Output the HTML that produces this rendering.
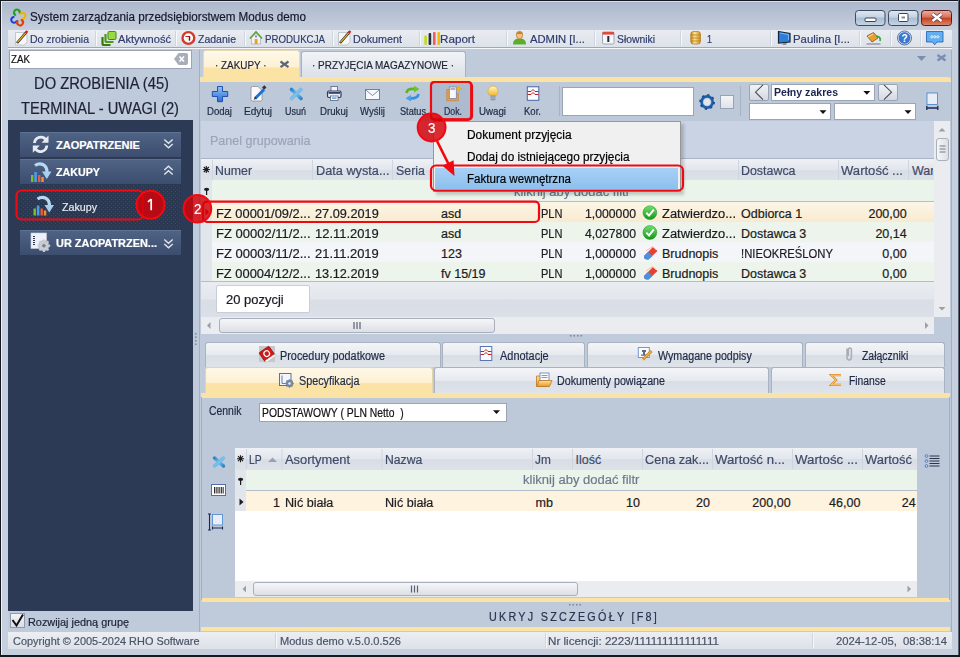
<!DOCTYPE html><html><head><meta charset="utf-8"><style>
*{margin:0;padding:0;box-sizing:border-box}
html,body{width:960px;height:657px;overflow:hidden;background:#bfcadb}
body{position:relative;font-family:"Liberation Sans",sans-serif}
.a{position:absolute}
.t{position:absolute;white-space:pre;line-height:1;transform-origin:0 0;font-family:"Liberation Sans",sans-serif;-webkit-text-stroke:0.2px currentColor}
svg{position:absolute;overflow:visible}
</style></head><body>
<div class="a" style="left:0px;top:0px;width:960px;height:657px;background:#bfcadb"></div>
<div class="a" style="left:0px;top:0px;width:960px;height:30px;background:linear-gradient(#aab6cb,#c6cfdd)"></div>
<div class="a" style="left:0px;top:0px;width:960px;height:1px;background:#15181e"></div>
<div class="a" style="left:1px;top:1px;width:958px;height:1px;background:#d9dfe9"></div>
<div class="a" style="left:0px;top:30px;width:8px;height:627px;background:#c6cfdd"></div>
<div class="a" style="left:952px;top:30px;width:7px;height:627px;background:#c6cfdd"></div>
<div class="a" style="left:0px;top:649px;width:960px;height:8px;background:#c6cfdd"></div>
<div class="a" style="left:0px;top:0px;width:1px;height:657px;background:#15181e"></div>
<div class="a" style="left:959px;top:0px;width:1px;height:657px;background:#15181e"></div>
<div class="a" style="left:958px;top:0px;width:1px;height:657px;background:#5a6272"></div>
<div class="a" style="left:0px;top:655px;width:960px;height:2px;background:#15181e"></div>
<div class="a" style="left:1px;top:1px;width:1px;height:654px;background:#eef2f7"></div>
<div class="a" style="left:8px;top:30px;width:944px;height:17px;background:linear-gradient(#e9ecf1,#dde2e9)"></div>
<div class="a" style="left:8px;top:47px;width:944px;height:1px;background:#a2a8b2"></div>
<div class="a" style="left:8px;top:48px;width:944px;height:1px;background:#f4f6f9"></div>
<div class="a" style="left:9px;top:50px;width:183px;height:19px;background:#fff;border:1px solid #9ba5b6"></div>
<div class="a" style="left:8px;top:120px;width:185px;height:491px;background:#2c3a56"></div>
<div class="a" style="left:20px;top:132px;width:161px;height:25px;background:linear-gradient(#4f6385,#3c4d6e);border-top:1px solid #5d7192"></div>
<div class="a" style="left:20px;top:159px;width:161px;height:25px;background:linear-gradient(#4f6385,#3c4d6e);border-top:1px solid #5d7192"></div>
<div class="a" style="left:20px;top:230px;width:161px;height:25px;background:linear-gradient(#4f6385,#3c4d6e);border-top:1px solid #5d7192"></div>
<svg width="161" height="45" style="left:20px;top:184px"><defs><pattern id="dots" x="0" y="0" width="4" height="4" patternUnits="userSpaceOnUse"><rect width="4" height="4" fill="#2a3852"/><rect x="1" y="1" width="1" height="1" fill="#3a4b6a"/><rect x="3" y="3" width="1" height="1" fill="#3a4b6a"/></pattern></defs><rect width="161" height="45" fill="url(#dots)"/></svg>
<div class="a" style="left:10px;top:613px;width:15px;height:15px;background:linear-gradient(#f3f4f7,#d9dde5);border:1px solid #8f99a9"></div>
<div class="a" style="left:8px;top:632px;width:944px;height:17px;background:linear-gradient(#eceef2,#dde1e8)"></div>
<div class="a" style="left:275px;top:633px;width:1px;height:15px;background:#d0d5dd;box-shadow:1px 0 0 #f6f7f9"></div>
<div class="a" style="left:545px;top:633px;width:1px;height:15px;background:#d0d5dd;box-shadow:1px 0 0 #f6f7f9"></div>
<div class="a" style="left:812px;top:633px;width:1px;height:15px;background:#d0d5dd;box-shadow:1px 0 0 #f6f7f9"></div>
<div class="a" style="left:199px;top:50px;width:1px;height:582px;background:#a4afc0"></div>
<div class="a" style="left:203px;top:50px;width:97px;height:28px;background:linear-gradient(#fef8e9 0%,#fdf1d2 60%,#fbe3a5 62%,#fbe3a5 100%);border:1px solid #e8d9b5;border-bottom:none;border-radius:3px 3px 0 0"></div>
<div class="a" style="left:301px;top:51px;width:165px;height:26px;background:linear-gradient(#f1f3f6,#dce1e8);border:1px solid #a9b2c1;border-bottom:none;border-radius:3px 3px 0 0"></div>
<div class="a" style="left:200px;top:77px;width:751px;height:5px;background:#fbe3a5;border-radius:0 3px 0 0"></div>
<div class="a" style="left:200px;top:82px;width:751px;height:39px;background:#bdc8d9"></div>
<div class="a" style="left:430px;top:81px;width:42px;height:39px;background:#aebbcf;border:2px solid #e41f26;border-radius:4px"></div>
<div class="a" style="left:559px;top:86px;width:1px;height:30px;background:#a7b2c3"></div>
<div class="a" style="left:740px;top:86px;width:1px;height:30px;background:#a7b2c3"></div>
<div class="a" style="left:562px;top:87px;width:132px;height:29px;background:#fff;border:1px solid #9aa4b4"></div>
<div class="a" style="left:720px;top:95px;width:14px;height:14px;background:linear-gradient(#f4f5f8,#dfe3ea);border:1px solid #98a2b3"></div>
<div class="a" style="left:749px;top:84px;width:20px;height:17px;background:linear-gradient(#f1f3f6,#d4d9e1);border:1px solid #9aa4b4;border-radius:2px"></div>
<div class="a" style="left:771px;top:84px;width:104px;height:17px;background:#fff;border:1px solid #9aa4b4"></div>
<div class="a" style="left:878px;top:84px;width:20px;height:17px;background:linear-gradient(#f1f3f6,#d4d9e1);border:1px solid #9aa4b4;border-radius:2px"></div>
<div class="a" style="left:749px;top:103px;width:82px;height:17px;background:#fff;border:1px solid #9aa4b4"></div>
<div class="a" style="left:834px;top:103px;width:82px;height:17px;background:#fff;border:1px solid #9aa4b4"></div>
<div class="a" style="left:201px;top:121px;width:733px;height:38px;background:#c9d3e3"></div>
<div class="a" style="left:201px;top:158px;width:733px;height:1px;background:#aab4c4"></div>
<div class="a" style="left:201px;top:159px;width:733px;height:21px;background:linear-gradient(#eef1f5,#e2e6ed 50%,#d8dde6 51%,#dde2e9)"></div>
<div class="a" style="left:201px;top:180px;width:733px;height:22px;background:#ebf4eb"></div>
<div class="a" style="left:201px;top:180px;width:11px;height:22px;background:#e1e6ec"></div>
<div class="a" style="left:201px;top:201px;width:733px;height:1px;background:#b4bdca"></div>
<div class="a" style="left:212px;top:202px;width:722px;height:20px;background:linear-gradient(#fdf6e6,#f8ead0)"></div>
<div class="a" style="left:212px;top:222px;width:722px;height:20px;background:#ecf4eb"></div>
<div class="a" style="left:212px;top:242px;width:722px;height:20px;background:#f3f5f9"></div>
<div class="a" style="left:212px;top:262px;width:722px;height:20px;background:#ecf4eb"></div>
<div class="a" style="left:201px;top:202px;width:11px;height:80px;background:#e1e6ec"></div>
<div class="a" style="left:201px;top:281px;width:733px;height:1px;background:#b4bdca"></div>
<div class="a" style="left:201px;top:282px;width:733px;height:35px;background:linear-gradient(#e9ecf1,#e3e6ec 48%,#d9dde5 52%,#dbdfe7)"></div>
<div class="a" style="left:216px;top:285px;width:94px;height:28px;background:#fff;border:1px solid #c7ced9;border-radius:2px"></div>
<div class="a" style="left:201px;top:317px;width:733px;height:17px;background:#eaecf0"></div>
<div class="a" style="left:219px;top:318px;width:276px;height:15px;background:linear-gradient(#f5f6f8,#dcdfe5);border:1px solid #a9b0bb;border-radius:3px"></div>
<div class="a" style="left:934px;top:121px;width:16px;height:196px;background:#eaecf0"></div>
<div class="a" style="left:936px;top:138px;width:13px;height:23px;background:linear-gradient(90deg,#f5f6f8,#dcdfe5);border:1px solid #a9b0bb;border-radius:3px"></div>
<div class="a" style="left:205px;top:342px;width:236px;height:25px;background:linear-gradient(#f3f5f8,#e6e9ee 50%,#d9dee6 52%,#dfe3ea);border:1px solid #a9b2c1;border-bottom:none;border-radius:3px 3px 0 0"></div>
<div class="a" style="left:442px;top:342px;width:143px;height:25px;background:linear-gradient(#f3f5f8,#e6e9ee 50%,#d9dee6 52%,#dfe3ea);border:1px solid #a9b2c1;border-bottom:none;border-radius:3px 3px 0 0"></div>
<div class="a" style="left:587px;top:342px;width:216px;height:25px;background:linear-gradient(#f3f5f8,#e6e9ee 50%,#d9dee6 52%,#dfe3ea);border:1px solid #a9b2c1;border-bottom:none;border-radius:3px 3px 0 0"></div>
<div class="a" style="left:805px;top:342px;width:140px;height:25px;background:linear-gradient(#f3f5f8,#e6e9ee 50%,#d9dee6 52%,#dfe3ea);border:1px solid #a9b2c1;border-bottom:none;border-radius:3px 3px 0 0"></div>
<div class="a" style="left:205px;top:367px;width:228px;height:27px;background:linear-gradient(#fef8e9 0%,#fdf1d2 55%,#fbe3a5 60%,#fbe3a5 100%);border:1px solid #e3d3ae;border-bottom:none;border-radius:3px 3px 0 0"></div>
<div class="a" style="left:434px;top:367px;width:335px;height:26px;background:linear-gradient(#f3f5f8,#e6e9ee 50%,#d9dee6 52%,#dfe3ea);border:1px solid #a9b2c1;border-bottom:none;border-radius:3px 3px 0 0"></div>
<div class="a" style="left:771px;top:367px;width:174px;height:26px;background:linear-gradient(#f3f5f8,#e6e9ee 50%,#d9dee6 52%,#dfe3ea);border:1px solid #a9b2c1;border-bottom:none;border-radius:3px 3px 0 0"></div>
<div class="a" style="left:201px;top:393px;width:749px;height:5px;background:#fbe3a5"></div>
<div class="a" style="left:201px;top:398px;width:749px;height:200px;background:#bdc8d9"></div>
<div class="a" style="left:259px;top:403px;width:248px;height:19px;background:#fff;border:1px solid #9aa4b4"></div>
<div class="a" style="left:235px;top:448px;width:682px;height:22px;background:linear-gradient(#eef1f5,#e2e6ed 50%,#d8dde6 51%,#dde2e9)"></div>
<div class="a" style="left:235px;top:470px;width:682px;height:21px;background:#ebf4eb"></div>
<div class="a" style="left:235px;top:490px;width:682px;height:1px;background:#b4bdca"></div>
<div class="a" style="left:246px;top:491px;width:671px;height:20px;background:#fdf3df"></div>
<div class="a" style="left:235px;top:470px;width:11px;height:41px;background:#e1e6ec"></div>
<div class="a" style="left:235px;top:511px;width:682px;height:70px;background:#fff"></div>
<div class="a" style="left:235px;top:581px;width:682px;height:16px;background:#eaecf0"></div>
<div class="a" style="left:253px;top:582px;width:325px;height:14px;background:linear-gradient(#f5f6f8,#dcdfe5);border:1px solid #a9b0bb;border-radius:3px"></div>
<div class="a" style="left:202px;top:598px;width:748px;height:4px;background:#fbe3a5"></div>
<div class="a" style="left:201px;top:627px;width:749px;height:4px;background:#fbe3a5"></div>
<div class="a" style="left:201px;top:397px;width:1px;height:203px;background:#a4afc0"></div>
<div class="a" style="left:949px;top:397px;width:1px;height:203px;background:#a4afc0"></div>
<div class="a" style="left:951px;top:50px;width:1px;height:582px;background:#a4afc0"></div>
<div class="t" style="left:30.00px;top:11px;font-size:12.5px;color:#15182a;transform:scaleX(0.9325);">System zarządzania przedsiębiorstwem Modus demo</div>
<div class="t" style="left:30.00px;top:34px;font-size:11.5px;color:#2f3c6e;transform:scaleX(0.9136);">Do zrobienia</div>
<div class="t" style="left:118.00px;top:34px;font-size:11.5px;color:#2f3c6e;transform:scaleX(0.9642);">Aktywność</div>
<div class="t" style="left:198.00px;top:34px;font-size:11.5px;color:#2f3c6e;transform:scaleX(0.9143);">Zadanie</div>
<div class="t" style="left:265.00px;top:34px;font-size:11.5px;color:#2f3c6e;transform:scaleX(0.8458);">PRODUKCJA</div>
<div class="t" style="left:353.00px;top:34px;font-size:11.5px;color:#2f3c6e;transform:scaleX(0.9347);">Dokument</div>
<div class="t" style="left:440.00px;top:34px;font-size:11.5px;color:#2f3c6e;transform:scaleX(1.0136);">Raport</div>
<div class="t" style="left:530.00px;top:34px;font-size:11.5px;color:#2f3c6e;transform:scaleX(0.9780);">ADMIN [I...</div>
<div class="t" style="left:617.00px;top:34px;font-size:11.5px;color:#2f3c6e;transform:scaleX(0.9007);">Słowniki</div>
<div class="t" style="left:707.00px;top:34px;font-size:11.5px;color:#2f3c6e;transform:scaleX(0.7805);">1</div>
<div class="t" style="left:793.00px;top:34px;font-size:11.5px;color:#2f3c6e;transform:scaleX(0.9905);">Paulina [I...</div>
<div class="t" style="left:11.00px;top:54px;font-size:11.5px;color:#111;transform:scaleX(0.8492);">ZAK</div>
<div class="t" style="left:34.00px;top:76px;font-size:16px;color:#1d2236;transform:scaleX(0.9202);">DO ZROBIENIA (45)</div>
<div class="t" style="left:21.00px;top:101px;font-size:16px;color:#1d2236;transform:scaleX(0.9178);">TERMINAL - UWAGI (2)</div>
<div class="t" style="left:56.00px;top:140px;font-size:11px;color:#fff;font-weight:bold;">ZAOPATRZENIE</div>
<div class="t" style="left:56.00px;top:167px;font-size:11px;color:#fff;font-weight:bold;transform:scaleX(0.9727);">ZAKUPY</div>
<div class="t" style="left:62.00px;top:202px;font-size:11.5px;color:#e6eaf0;transform:scaleX(0.9279);">Zakupy</div>
<div class="t" style="left:56.00px;top:238px;font-size:11px;color:#fff;font-weight:bold;transform:scaleX(0.9935);">UR ZAOPATRZEN...</div>
<div class="t" style="left:27.50px;top:617px;font-size:11.5px;color:#1d2236;transform:scaleX(0.9460);">Rozwijaj jedną grupę</div>
<div class="t" style="left:12.50px;top:636px;font-size:11.5px;color:#4a5468;transform:scaleX(0.9496);">Copyright © 2005-2024 RHO Software</div>
<div class="t" style="left:280.00px;top:636px;font-size:11.5px;color:#4a5468;transform:scaleX(0.9623);">Modus demo v.5.0.0.526</div>
<div class="t" style="left:548.00px;top:636px;font-size:11.5px;color:#4a5468;transform:scaleX(1.0118);">Nr licencji: 2223/111111111111111</div>
<div class="t" style="left:836.00px;top:636px;font-size:11.5px;color:#4a5468;transform:scaleX(0.9807);">2024-12-05,  08:38:14</div>
<div class="t" style="left:215.00px;top:60px;font-size:11.5px;color:#1d2236;transform:scaleX(0.8603);">· ZAKUPY ·</div>
<div class="t" style="left:312.00px;top:60px;font-size:11.5px;color:#1d2236;transform:scaleX(0.8647);">· PRZYJĘCIA MAGAZYNOWE ·</div>
<div class="t" style="left:207.00px;top:107px;font-size:10px;color:#1f2a45;transform:scaleX(0.9564);">Dodaj</div>
<div class="t" style="left:244.00px;top:107px;font-size:10px;color:#1f2a45;transform:scaleX(1.0073);">Edytuj</div>
<div class="t" style="left:285.00px;top:107px;font-size:10px;color:#1f2a45;transform:scaleX(0.8990);">Usuń</div>
<div class="t" style="left:320.00px;top:107px;font-size:10px;color:#1f2a45;transform:scaleX(0.9686);">Drukuj</div>
<div class="t" style="left:360.00px;top:107px;font-size:10px;color:#1f2a45;transform:scaleX(0.9610);">Wyślij</div>
<div class="t" style="left:400.00px;top:107px;font-size:10px;color:#1f2a45;transform:scaleX(0.9168);">Status</div>
<div class="t" style="left:444.00px;top:107px;font-size:10px;color:#1f2a45;transform:scaleX(0.8754);">Dok.</div>
<div class="t" style="left:479.00px;top:107px;font-size:10px;color:#1f2a45;transform:scaleX(0.9713);">Uwagi</div>
<div class="t" style="left:524.00px;top:107px;font-size:10px;color:#1f2a45;transform:scaleX(0.9552);">Kor.</div>
<div class="t" style="left:774.00px;top:87px;font-size:11px;color:#1a2550;font-weight:bold;transform:scaleX(0.9602);-webkit-text-stroke:0">Pełny zakres</div>
<div class="t" style="left:209.50px;top:134px;font-size:13px;color:#9aa5b7;transform:scaleX(0.9656);">Panel grupowania</div>
<div class="t" style="left:215.00px;top:165px;font-size:12.5px;color:#3f4b66;transform:scaleX(0.9863);">Numer</div>
<div class="t" style="left:315.50px;top:165px;font-size:12.5px;color:#3f4b66;transform:scaleX(1.0173);">Data wysta...</div>
<div class="t" style="left:395.50px;top:165px;font-size:12.5px;color:#3f4b66;transform:scaleX(0.9936);">Seria</div>
<div class="t" style="left:741.00px;top:165px;font-size:12.5px;color:#3f4b66;transform:scaleX(0.9929);">Dostawca</div>
<div class="t" style="left:841.00px;top:165px;font-size:12.5px;color:#3f4b66;transform:scaleX(1.0461);">Wartość ...</div>
<div class="a" style="left:909px;top:160px;width:24px;height:20px;overflow:hidden"><div class="t" style="left:3px;top:5px;font-size:12.5px;color:#3f4b66">War</div></div>
<div class="t" style="left:514.00px;top:186px;font-size:12.5px;color:#6e7a8c;transform:scaleX(1.0370);">kliknij aby dodać filtr</div>
<div class="t" style="left:215.50px;top:208px;font-size:12.5px;color:#1b1b22;transform:scaleX(1.0301);">FZ 00001/09/2...</div>
<div class="t" style="left:315.00px;top:208px;font-size:12.5px;color:#1b1b22;transform:scaleX(1.0190);">27.09.2019</div>
<div class="t" style="left:441.00px;top:208px;font-size:12.5px;color:#1b1b22;">asd</div>
<div class="t" style="left:541.00px;top:208px;font-size:12.5px;color:#1b1b22;transform:scaleX(0.8838);">PLN</div>
<div class="t" style="left:585.00px;top:208px;font-size:12.5px;color:#1b1b22;transform:scaleX(0.9781);">1,000000</div>
<div class="t" style="left:662.00px;top:208px;font-size:12.5px;color:#1b1b22;transform:scaleX(1.0341);">Zatwierdzo...</div>
<div class="t" style="left:741.00px;top:208px;font-size:12.5px;color:#1b1b22;">Odbiorca 1</div>
<div class="t" style="left:868.47px;top:208px;font-size:12.5px;color:#1b1b22;">200,00</div>
<div class="t" style="left:215.50px;top:228px;font-size:12.5px;color:#1b1b22;transform:scaleX(1.0408);">FZ 00002/11/2...</div>
<div class="t" style="left:315.00px;top:228px;font-size:12.5px;color:#1b1b22;transform:scaleX(1.0342);">12.11.2019</div>
<div class="t" style="left:441.00px;top:228px;font-size:12.5px;color:#1b1b22;">asd</div>
<div class="t" style="left:541.00px;top:228px;font-size:12.5px;color:#1b1b22;transform:scaleX(0.8838);">PLN</div>
<div class="t" style="left:585.00px;top:228px;font-size:12.5px;color:#1b1b22;transform:scaleX(0.9781);">4,027800</div>
<div class="t" style="left:662.00px;top:228px;font-size:12.5px;color:#1b1b22;transform:scaleX(1.0341);">Zatwierdzo...</div>
<div class="t" style="left:741.00px;top:228px;font-size:12.5px;color:#1b1b22;">Dostawca 3</div>
<div class="t" style="left:875.42px;top:228px;font-size:12.5px;color:#1b1b22;">20,14</div>
<div class="t" style="left:215.50px;top:248px;font-size:12.5px;color:#1b1b22;transform:scaleX(1.0408);">FZ 00003/11/2...</div>
<div class="t" style="left:315.00px;top:248px;font-size:12.5px;color:#1b1b22;transform:scaleX(1.0342);">21.11.2019</div>
<div class="t" style="left:441.00px;top:248px;font-size:12.5px;color:#1b1b22;">123</div>
<div class="t" style="left:541.00px;top:248px;font-size:12.5px;color:#1b1b22;transform:scaleX(0.8838);">PLN</div>
<div class="t" style="left:585.00px;top:248px;font-size:12.5px;color:#1b1b22;transform:scaleX(0.9781);">1,000000</div>
<div class="t" style="left:662.00px;top:248px;font-size:12.5px;color:#1b1b22;">Brudnopis</div>
<div class="t" style="left:741.00px;top:248px;font-size:12.5px;color:#1b1b22;transform:scaleX(0.9009);">!NIEOKREŚLONY</div>
<div class="t" style="left:882.36px;top:248px;font-size:12.5px;color:#1b1b22;">0,00</div>
<div class="t" style="left:215.50px;top:268px;font-size:12.5px;color:#1b1b22;transform:scaleX(1.0301);">FZ 00004/12/2...</div>
<div class="t" style="left:315.00px;top:268px;font-size:12.5px;color:#1b1b22;transform:scaleX(1.0190);">13.12.2019</div>
<div class="t" style="left:441.00px;top:268px;font-size:12.5px;color:#1b1b22;">fv 15/19</div>
<div class="t" style="left:541.00px;top:268px;font-size:12.5px;color:#1b1b22;transform:scaleX(0.8838);">PLN</div>
<div class="t" style="left:585.00px;top:268px;font-size:12.5px;color:#1b1b22;transform:scaleX(0.9781);">1,000000</div>
<div class="t" style="left:662.00px;top:268px;font-size:12.5px;color:#1b1b22;">Brudnopis</div>
<div class="t" style="left:741.00px;top:268px;font-size:12.5px;color:#1b1b22;">Dostawca 3</div>
<div class="t" style="left:882.36px;top:268px;font-size:12.5px;color:#1b1b22;">0,00</div>
<div class="t" style="left:225.80px;top:294px;font-size:12.5px;color:#1b1b22;transform:scaleX(1.0379);">20 pozycji</div>
<div class="t" style="left:280.40px;top:350px;font-size:12px;color:#1f2a45;transform:scaleX(0.9046);">Procedury podatkowe</div>
<div class="t" style="left:499.70px;top:350px;font-size:12px;color:#1f2a45;transform:scaleX(0.9124);">Adnotacje</div>
<div class="t" style="left:658.40px;top:350px;font-size:12px;color:#1f2a45;transform:scaleX(0.8909);">Wymagane podpisy</div>
<div class="t" style="left:862.30px;top:350px;font-size:12px;color:#1f2a45;transform:scaleX(0.8677);">Załączniki</div>
<div class="t" style="left:299.00px;top:375px;font-size:12px;color:#1f2a45;transform:scaleX(0.8980);">Specyfikacja</div>
<div class="t" style="left:557.00px;top:375px;font-size:12px;color:#1f2a45;transform:scaleX(0.8896);">Dokumenty powiązane</div>
<div class="t" style="left:849.20px;top:375px;font-size:12px;color:#1f2a45;transform:scaleX(0.8618);">Finanse</div>
<div class="t" style="left:209.30px;top:405px;font-size:12px;color:#1f2a45;transform:scaleX(0.8673);">Cennik</div>
<div class="t" style="left:261.70px;top:407px;font-size:12px;color:#111;transform:scaleX(0.8610);">PODSTAWOWY ( PLN Netto  )</div>
<div class="t" style="left:249.30px;top:454px;font-size:12.5px;color:#3f4b66;transform:scaleX(0.8302);">LP</div>
<div class="t" style="left:285.00px;top:454px;font-size:12.5px;color:#3f4b66;transform:scaleX(1.0282);">Asortyment</div>
<div class="t" style="left:385.00px;top:454px;font-size:12.5px;color:#3f4b66;transform:scaleX(0.9760);">Nazwa</div>
<div class="t" style="left:535.00px;top:454px;font-size:12.5px;color:#3f4b66;transform:scaleX(0.9477);">Jm</div>
<div class="t" style="left:575.50px;top:454px;font-size:12.5px;color:#3f4b66;">Ilość</div>
<div class="t" style="left:645.00px;top:454px;font-size:12.5px;color:#3f4b66;transform:scaleX(1.0121);">Cena zak...</div>
<div class="t" style="left:715.00px;top:454px;font-size:12.5px;color:#3f4b66;transform:scaleX(1.0571);">Wartość n...</div>
<div class="t" style="left:795.00px;top:454px;font-size:12.5px;color:#3f4b66;transform:scaleX(1.0630);">Wartośc ...</div>
<div class="t" style="left:865.00px;top:454px;font-size:12.5px;color:#3f4b66;transform:scaleX(1.0358);">Wartość</div>
<div class="t" style="left:523.30px;top:474px;font-size:12.5px;color:#6e7a8c;transform:scaleX(1.0406);">kliknij aby dodać filtr</div>
<div class="t" style="left:273.05px;top:497px;font-size:12.5px;color:#1b1b22;">1</div>
<div class="t" style="left:285.00px;top:497px;font-size:12.5px;color:#1b1b22;transform:scaleX(1.0076);">Nić biała</div>
<div class="t" style="left:385.00px;top:497px;font-size:12.5px;color:#1b1b22;transform:scaleX(1.0076);">Nić biała</div>
<div class="t" style="left:535.50px;top:497px;font-size:12.5px;color:#1b1b22;">mb</div>
<div class="t" style="left:626.09px;top:497px;font-size:12.5px;color:#1b1b22;">10</div>
<div class="t" style="left:696.09px;top:497px;font-size:12.5px;color:#1b1b22;">20</div>
<div class="t" style="left:752.37px;top:497px;font-size:12.5px;color:#1b1b22;">200,00</div>
<div class="t" style="left:829.12px;top:497px;font-size:12.5px;color:#1b1b22;">46,00</div>
<div class="t" style="left:901.70px;top:497px;font-size:12.5px;color:#1b1b22;">24</div>
<div class="t" style="left:489.00px;top:611px;font-size:12px;color:#2a3350;letter-spacing:2.5px;transform:scaleX(0.8998);">UKRYJ SZCZEGÓŁY [F8]</div>
<svg width="960" height="657" style="left:0;top:0">
<defs>
<linearGradient id="btnG" x1="0" y1="0" x2="0" y2="1">
<stop offset="0" stop-color="#dfe8f2"/><stop offset="0.45" stop-color="#c3d3e4"/><stop offset="0.5" stop-color="#a9bdd3"/><stop offset="1" stop-color="#c5d5e6"/>
</linearGradient>
<linearGradient id="clsG" x1="0" y1="0" x2="0" y2="1">
<stop offset="0" stop-color="#eab0a4"/><stop offset="0.45" stop-color="#d8705c"/><stop offset="0.5" stop-color="#c4401f"/><stop offset="1" stop-color="#dd8a6e"/>
</linearGradient>
<linearGradient id="plusG" x1="0" y1="0" x2="0" y2="1"><stop offset="0" stop-color="#8cc0f5"/><stop offset="1" stop-color="#2f6fd6"/></linearGradient>
<linearGradient id="chkG" x1="0" y1="0" x2="0" y2="1"><stop offset="0" stop-color="#6ee06a"/><stop offset="1" stop-color="#139a1a"/></linearGradient>
<linearGradient id="goldG" x1="0" y1="0" x2="1" y2="0"><stop offset="0" stop-color="#c98a12"/><stop offset="0.4" stop-color="#ffe39a"/><stop offset="1" stop-color="#d09420"/></linearGradient>
<linearGradient id="bulbG" x1="0" y1="0" x2="0" y2="1"><stop offset="0" stop-color="#fff6b0"/><stop offset="1" stop-color="#f2b01c"/></linearGradient>
<linearGradient id="folderG" x1="0" y1="0" x2="0" y2="1"><stop offset="0" stop-color="#ffd88a"/><stop offset="1" stop-color="#e09a30"/></linearGradient>
</defs>
<!-- dotted expanded nav area -->
<!-- title app icon -->
<g fill="none" stroke-width="2.1" stroke-linecap="round">
<path d="M15.2 14.8 A2.9 2.9 0 1 1 19.8 12.8" stroke="#22a022"/>
<path d="M20.6 13.6 A2.9 2.9 0 1 1 23 18.6" stroke="#f0b400"/>
<path d="M13.6 17 A2.9 2.9 0 1 0 16.6 21.4" stroke="#1d3fd0"/>
<path d="M17.6 21 A2.9 2.9 0 1 0 21.6 20" stroke="#e04010"/>
</g>
<!-- window buttons -->
<rect x="855.5" y="10.5" width="29.5" height="15" rx="3" fill="url(#btnG)" stroke="#3e4a5e"/>
<rect x="888.5" y="10.5" width="29.5" height="15" rx="3" fill="url(#btnG)" stroke="#3e4a5e"/>
<rect x="921.5" y="10.5" width="30" height="15" rx="3" fill="url(#clsG)" stroke="#5a1a1a"/>
<rect x="865" y="18" width="11" height="3.5" rx="1" fill="#fff" stroke="#3c4350"/>
<rect x="898.5" y="13.5" width="9.5" height="8" rx="1" fill="#fff" stroke="#3c4350"/>
<rect x="901.5" y="16.5" width="3.5" height="2" fill="#7a8aa0"/>
<path d="M932.5 14 L941.5 21 M941.5 14 L932.5 21" stroke="#4a3a40" stroke-width="4" stroke-linecap="butt"/>
<path d="M932.5 14 L941.5 21 M941.5 14 L932.5 21" stroke="#fff" stroke-width="2.6" stroke-linecap="butt"/>
<!-- menu separators -->
<g fill="#cfd5de">
<rect x="95" y="31" width="1" height="15"/><rect x="175" y="31" width="1" height="15"/><rect x="244" y="31" width="1" height="15"/>
<rect x="332" y="31" width="1" height="15"/><rect x="419" y="31" width="1" height="15"/><rect x="506" y="31" width="1" height="15"/>
<rect x="594" y="31" width="1" height="15"/><rect x="680" y="31" width="1" height="15"/><rect x="770" y="31" width="1" height="15"/>
<rect x="859" y="31" width="1" height="15"/><rect x="890" y="31" width="1" height="15"/><rect x="920" y="31" width="1" height="15"/>
</g>
<g fill="#f7f8fa">
<rect x="96" y="31" width="1" height="15"/><rect x="176" y="31" width="1" height="15"/><rect x="245" y="31" width="1" height="15"/>
<rect x="333" y="31" width="1" height="15"/><rect x="420" y="31" width="1" height="15"/><rect x="507" y="31" width="1" height="15"/>
<rect x="595" y="31" width="1" height="15"/><rect x="681" y="31" width="1" height="15"/><rect x="771" y="31" width="1" height="15"/>
<rect x="860" y="31" width="1" height="15"/><rect x="891" y="31" width="1" height="15"/><rect x="921" y="31" width="1" height="15"/>
</g>
<!-- pencil icons (Do zrobienia, Dokument) -->
<g id="pen1">
<path d="M15.5 32.5 h9 l2.5 2.5 v7 l-3 3 h-8.5 z" fill="#f7f7f7" stroke="#b8bcc4" stroke-width="0.8"/>
<path d="M17 43 L26.5 32" stroke="#2b2b2b" stroke-width="2.6"/>
<path d="M17.4 42.4 L26 32.6" stroke="#f0c020" stroke-width="1.1"/>
<path d="M25.5 33 L27.5 31" stroke="#e02020" stroke-width="2.4"/>
</g>
<use href="#pen1" x="323" y="0"/>
<!-- Aktywnosc -->
<path d="M102.5 37 v6.5 q0 1.5 1.5 1.5 h6.5" fill="none" stroke="#3a7a10" stroke-width="2.2"/>
<path d="M105.5 34 v6.5 q0 1.5 1.5 1.5 h6.5" fill="none" stroke="#4e9a18" stroke-width="2.2"/>
<rect x="108" y="31.5" width="8" height="8" rx="1.2" fill="#9ad848" stroke="#3f8a12" stroke-width="1"/>
<!-- Zadanie -->
<circle cx="188.4" cy="38" r="5.9" fill="#f4f6f8" stroke="#d23a2a" stroke-width="2.4"/>
<path d="M185.5 36.5 H189.5 V40.5" fill="none" stroke="#c02020" stroke-width="1.2"/>
<path d="M189.5 36.5 V40.5" stroke="#1c2a50" stroke-width="1.2"/>
<!-- PRODUKCJA house -->
<path d="M250 38.5 L256 32 L262 38.5" fill="none" stroke="#5aa02a" stroke-width="1.8"/>
<path d="M251.5 38 L256 33.5 L260.5 38 V44 H251.5 Z" fill="#f2f4f7" stroke="#a0a8b4" stroke-width="0.7"/>
<rect x="254.6" y="39" width="3" height="5" fill="#f0a020"/>
<rect x="255" y="35.5" width="2" height="2" fill="#7a90c0"/>
<!-- Raport bars -->
<rect x="424.3" y="35.5" width="2.6" height="9.5" rx="1" fill="#c8d820"/>
<rect x="428.6" y="33" width="2.6" height="12" rx="1" fill="#243040"/>
<rect x="433" y="32" width="2.6" height="13" rx="1" fill="#e86060"/>
<rect x="437.4" y="32" width="2.6" height="13" rx="1" fill="#f0c000"/>
<!-- ADMIN user -->
<path d="M513 44.5 C513 39.5 516 38.5 519.5 38.5 C523 38.5 526 39.5 526 44.5 Z" fill="#5cae2a"/>
<ellipse cx="519.5" cy="35" rx="3.2" ry="3.8" fill="#f5c080" stroke="#b07830" stroke-width="0.7"/>
<path d="M516.3 34 C516.5 31 522.5 31 522.7 34" fill="#c88030"/>
<!-- Slowniki calendar -->
<rect x="602.5" y="32" width="11.5" height="12" rx="1.2" fill="#f4f6f9" stroke="#8a94a4" stroke-width="0.8"/>
<rect x="602.5" y="32" width="11.5" height="2.6" fill="#e04a3a"/>
<rect x="607.3" y="36" width="2" height="6" fill="#2a2a36"/>
<!-- coins -->
<rect x="690.8" y="31.5" width="9.6" height="12.5" rx="2.5" fill="url(#goldG)" stroke="#b07010" stroke-width="0.7"/>
<path d="M691 35 h9.4 M691 38 h9.4 M691 41 h9.4" stroke="#b27a10" stroke-width="0.8"/>
<!-- monitor -->
<path d="M778.5 31.5 L790 33.5 V42 L778.5 43 Z" fill="#2c7fd8" stroke="#1a2438" stroke-width="1.2"/>
<path d="M780 33 L788.5 34.5 V40" fill="none" stroke="#8ccaff" stroke-width="0.8"/>
<path d="M782 43.5 L787 42.8 L786 45 L783 45 Z" fill="#8a9098"/>
<!-- paint bucket -->
<path d="M867 36 L873.5 32.5 L878 38 L872 42 Z" fill="#e8a030" stroke="#8a5010" stroke-width="0.8"/>
<path d="M868 37 L873 34" stroke="#ffe0a0" stroke-width="1"/>
<path d="M876 36 C879 36 881 38 880 41" fill="none" stroke="#3aa030" stroke-width="1.6"/>
<rect x="866.5" y="43" width="14" height="2" fill="#a8afb8"/>
<!-- help -->
<circle cx="904.5" cy="38" r="6.3" fill="#3a78d0" stroke="#e8eef8" stroke-width="0.8"/>
<circle cx="904.5" cy="38" r="7" fill="none" stroke="#3a5a90" stroke-width="0.8"/>
<text x="904.5" y="41.8" font-family="Liberation Sans" font-weight="bold" font-size="10" fill="#fff" text-anchor="middle">?</text>
<!-- message -->
<path d="M926.5 31.5 h16.5 v10.5 h-6 l-2.3 2.8 l-2.3 -2.8 h-5.9 z" fill="#62aef0" stroke="#2a6ab8" stroke-width="0.9"/>
<circle cx="931.8" cy="36.8" r="1.1" fill="none" stroke="#fff" stroke-width="0.8"/><circle cx="934.8" cy="36.8" r="1.1" fill="none" stroke="#fff" stroke-width="0.8"/><circle cx="937.8" cy="36.8" r="1.1" fill="none" stroke="#fff" stroke-width="0.8"/>
<!-- search clear -->
<path d="M174 59 L178.5 53 H186 Q188 53 188 55 V63 Q188 65 186 65 H178.5 Z" fill="#a8aeb8"/>
<path d="M179.5 56.5 L184 61.5 M184 56.5 L179.5 61.5" stroke="#fff" stroke-width="1.6"/>
<!-- nav icons -->
<g fill="none" stroke="#e6eaf2" stroke-width="2.8">
<path d="M34.5 143 A6.3 6.3 0 0 1 46 140"/>
<path d="M46.8 145.5 A6.3 6.3 0 0 1 35.2 148.6"/>
</g>
<path d="M48.5 135.5 V142.8 H41.5 Z" fill="#e6eaf2"/>
<path d="M32.8 152.8 V145.6 H39.8 Z" fill="#e6eaf2"/>
<g id="chartArrow">
<rect x="31" y="175" width="2.4" height="7" fill="#7ac030"/>
<rect x="34.3" y="172" width="2.6" height="10" fill="#4a9ee8"/>
<rect x="38" y="175" width="2.4" height="7" fill="#e85a40"/>
<rect x="41.3" y="177" width="2.5" height="5" fill="#f09030"/>
<path d="M35 165.5 C40 162 47 164 47 172" fill="none" stroke="#b8d8f4" stroke-width="3.2"/>
<path d="M42 171.5 L51.5 171.5 L46.8 179 Z" fill="#a8cff0"/>
</g>
<use href="#chartArrow" x="2.5" y="33.5"/>
<g fill="none" stroke="#dfe4ec" stroke-width="1.4">
<path d="M164.3 139.5 L168.5 143.3 L172.7 139.5 M164.3 144 L168.5 147.8 L172.7 144"/>
<path d="M164.3 170 L168.5 166.2 L172.7 170 M164.3 174.5 L168.5 170.7 L172.7 174.5"/>
<path d="M164.3 239.5 L168.5 243.3 L172.7 239.5 M164.3 244 L168.5 247.8 L172.7 244"/>
</g>
<!-- UR icon -->
<rect x="31" y="233" width="15.5" height="15.5" fill="#eef1f7" stroke="#c9d0dc" stroke-width="0.6"/>
<path d="M33 236.5 h2 M33 238.5 h2 M33 240.5 h2 M33 242.5 h2 M33 244.5 h2" stroke="#2a3350" stroke-width="1"/>
<g transform="translate(43.9 245.8)">
<circle r="5.2" fill="#c8ccd4" stroke="#9aa0aa" stroke-width="0.6"/>
<path d="M0 -6.3 V6.3 M-6.3 0 H6.3 M-4.5 -4.5 L4.5 4.5 M4.5 -4.5 L-4.5 4.5" stroke="#c8ccd4" stroke-width="2"/>
<circle r="1.8" fill="#7a808c"/>
</g>
<!-- checkbox check -->
<path d="M12.5 620 L16.5 625.5 L23 614.5" fill="none" stroke="#111" stroke-width="2"/>
</svg>

<svg width="960" height="657" style="left:0;top:0">
<defs>
<linearGradient id="plusG2" x1="0" y1="0" x2="0" y2="1"><stop offset="0" stop-color="#8ec2f6"/><stop offset="1" stop-color="#2d6cd4"/></linearGradient>
<linearGradient id="xG" x1="0" y1="0" x2="1" y2="1"><stop offset="0" stop-color="#2c86c8"/><stop offset="0.5" stop-color="#7ec4f0"/><stop offset="1" stop-color="#2c86c8"/></linearGradient>
<linearGradient id="chkG2" x1="0" y1="0" x2="0" y2="1"><stop offset="0" stop-color="#72e070"/><stop offset="1" stop-color="#119818"/></linearGradient>
<linearGradient id="bulbG2" x1="0" y1="0" x2="0" y2="1"><stop offset="0" stop-color="#fff8c0"/><stop offset="1" stop-color="#f0b020"/></linearGradient>
<linearGradient id="folderG2" x1="0" y1="0" x2="0" y2="1"><stop offset="0" stop-color="#ffe09a"/><stop offset="1" stop-color="#e39a2a"/></linearGradient>
</defs>
<!-- tab X, right dropdown, X -->
<path d="M280.5 61.5 L288.5 67.2 M288.5 61.5 L280.5 67.2" stroke="#5d6677" stroke-width="2.2"/>
<path d="M917 56 H926 L921.5 61 Z" fill="#7d8db0"/>
<path d="M937.5 55 L945.5 60.5 M945.5 55 L937.5 60.5" stroke="#7d8db0" stroke-width="2.4"/>
<!-- toolbar: plus -->
<path d="M217.5 86.5 h5 v5 h5.2 v5 h-5.2 v5.2 h-5 v-5.2 h-5.2 v-5 h5.2 z" fill="url(#plusG2)" stroke="#2050b0" stroke-width="1"/>
<!-- edit -->
<path d="M251 88 Q251 86.5 252.5 86.5 H258 L262 90.5 V99.5 Q262 101 260.5 101 H252.5 Q251 101 251 99.5 Z" fill="#fafafa" stroke="#8a8e96" stroke-width="0.8"/>
<path d="M255 98.5 L264 89.5" stroke="#1f6fd8" stroke-width="3"/>
<path d="M263 88.5 L265.5 86.5" stroke="#333" stroke-width="3"/>
<path d="M253.5 100 L255.2 96.8 L256.8 98.4 Z" fill="#333"/>
<!-- delete X -->
<path d="M291.5 89.5 L301 98.5 M301 89.5 L291.5 98.5" stroke="url(#xG)" stroke-width="3.6" stroke-linecap="round"/>
<!-- printer -->
<rect x="331" y="86.5" width="6.5" height="5.5" fill="#f4f6fa" stroke="#5a6480" stroke-width="0.8"/>
<rect x="327.5" y="91" width="13.5" height="6.5" rx="1.5" fill="#e8ecf4" stroke="#2e3a60" stroke-width="1.2"/>
<rect x="328.5" y="92" width="11.5" height="1.8" fill="#33406a"/>
<rect x="330.5" y="96" width="7.5" height="4.5" fill="#fff" stroke="#5a6480" stroke-width="0.8"/>
<rect x="332" y="97.3" width="4.5" height="1.6" fill="#5ab0e8"/>
<!-- envelope -->
<rect x="365.5" y="89.5" width="14" height="10" fill="#f8f9fc" stroke="#7080a8" stroke-width="1"/>
<path d="M365.8 90 L372.5 95.5 L379.2 90" fill="none" stroke="#7080a8" stroke-width="0.9"/>
<!-- status refresh -->
<path d="M406.5 93 C407 89 411 88.5 415 89" fill="none" stroke="#60b030" stroke-width="2.6"/>
<path d="M414 85.8 L419.5 89 L414 92.5 Z" fill="#70c030"/>
<path d="M418.5 94 C418 98 414 98.5 410 98.3" fill="none" stroke="#3a90e0" stroke-width="2.6"/>
<path d="M411 95 L405.5 98.3 L411 101.5 Z" fill="#4aa0e8"/>
<!-- Dok icon -->
<path d="M446.8 89.5 h2.5 v9 h6.5 v-5 h2.5 v7.3 h-11.5 z" fill="#e6a04a" stroke="#c07a28" stroke-width="0.6"/>
<rect x="449.3" y="87" width="7" height="11.5" fill="#f7f8fb" stroke="#7a88a8" stroke-width="0.8"/>
<path d="M450.5 89 h4.5" stroke="#5a6a90" stroke-width="1"/>
<path d="M458.8 85.8 L459.6 88.3 L462 89 L459.6 89.8 L458.8 92.3 L458 89.8 L455.6 89 L458 88.3 Z" fill="#f6c020" stroke="#e09a10" stroke-width="0.5"/>
<!-- bulb -->
<ellipse cx="493" cy="91.3" rx="5" ry="5.3" fill="url(#bulbG2)" stroke="#e0a020" stroke-width="0.6"/>
<rect x="490.5" y="95.5" width="5" height="4.8" rx="1" fill="#8890a0"/>
<path d="M490.5 97 h5 M490.5 98.6 h5" stroke="#c8ccd4" stroke-width="0.6"/>
<!-- Kor -->
<rect x="527.3" y="86.8" width="11.5" height="13.5" fill="#fbfcfe" stroke="#4a64a8" stroke-width="1"/>
<path d="M527.5 91.5 L531 91.5 L533 89.5 L535 91.5 L538.5 91.5 M527.5 94.5 L531 94.5 L533 92.5 L535 94.5 L538.5 94.5" fill="none" stroke="#c02020" stroke-width="1"/>
<!-- gear -->
<g transform="translate(707.1 102)">
<circle r="5.6" fill="none" stroke="#1f5fa8" stroke-width="2.6"/>
<circle r="6.9" fill="none" stroke="#1a4f9a" stroke-width="2" stroke-dasharray="2.2 3.2"/>
<circle r="3.2" fill="#dfe6f0"/>
</g>
<!-- prev/next chevrons -->
<path d="M763 84.8 L755.5 92.2 L763 99.7" fill="none" stroke="#4a4e56" stroke-width="1.1"/>
<path d="M884 84.8 L891.5 92.2 L884 99.7" fill="none" stroke="#4a4e56" stroke-width="1.1"/>
<!-- combo arrows -->
<path d="M863.3 91 H870.3 L866.8 94.8 Z" fill="#111"/>
<path d="M819.5 110.2 H826.5 L823 114 Z" fill="#111"/>
<path d="M904.5 110.2 H911.5 L908 114 Z" fill="#111"/>
<path d="M493 410.2 H500 L496.5 414 Z" fill="#111"/>
<!-- right toolbar icon -->
<rect x="927" y="93" width="10.5" height="11.5" fill="#e8eef8" stroke="#3a80d0" stroke-width="0.8"/>
<path d="M926.5 108 H938 M926.8 105.8 V110 M937.8 105.8 V110" stroke="#1a2a50" stroke-width="1.3"/>
<!-- grid header symbols -->
<g stroke="#1c1c1c" stroke-width="1.1">
<path d="M206.3 166 V173 M202.8 169.5 H209.8 M203.8 167 L208.8 172 M208.8 167 L203.8 172"/>
<path d="M240.5 455.2 V462.2 M237 458.7 H244 M238 456.2 L243 461.2 M243 456.2 L238 461.2"/>
</g>
<g fill="#1c1c1c">
<ellipse cx="206.6" cy="189.3" rx="2.6" ry="1.6"/><rect x="206" y="190" width="1.2" height="5"/>
<ellipse cx="240.6" cy="479.3" rx="2.6" ry="1.6"/><rect x="240" y="480" width="1.2" height="5"/>
<path d="M239.5 498.5 L243.5 502 L239.5 505.5 Z"/>
</g>
<path d="M205.5 208.5 L209 212 L205.5 215.5 Z" fill="#8a1010"/>
<!-- header column separators grid1 -->
<g fill="#cfd5de">
<rect x="212" y="160" width="1" height="20"/><rect x="312" y="160" width="1" height="20"/><rect x="392" y="160" width="1" height="20"/>
<rect x="738" y="160" width="1" height="20"/><rect x="838" y="160" width="1" height="20"/><rect x="908" y="160" width="1" height="20"/>
<rect x="246" y="449" width="1" height="20"/><rect x="281.5" y="449" width="1" height="20"/><rect x="381.5" y="449" width="1" height="20"/>
<rect x="532" y="449" width="1" height="20"/><rect x="572" y="449" width="1" height="20"/><rect x="642" y="449" width="1" height="20"/>
<rect x="712" y="449" width="1" height="20"/><rect x="792" y="449" width="1" height="20"/><rect x="862" y="449" width="1" height="20"/>
</g>
<!-- sort triangle LP -->
<path d="M268 462 L272.5 457.5 L277 462 Z" fill="#9aa2b0"/>
<!-- status icons -->
<g id="chk">
<circle cx="649.9" cy="212.7" r="6.9" fill="url(#chkG2)" stroke="#1a8a1a" stroke-width="0.5"/>
<path d="M646.3 212.8 L649 215.6 L653.8 209.6" fill="none" stroke="#fff" stroke-width="2"/>
</g>
<use href="#chk" y="19.8"/>
<g id="eras">
<path d="M644 256 L653 247 L657.5 251 L648.5 259.5 Q646 260 644 258 Z" fill="#e84030"/>
<path d="M644 256 L648 252 L652.5 256 L648.5 259.5 Q646 260 644 258 Z" fill="#4a90e0"/>
<path d="M646 251 L652.5 246.5 L656 249.5" fill="none" stroke="#ffb8a8" stroke-width="1"/>
</g>
<use href="#eras" y="20"/>
<!-- scrollbar grid1 -->
<path d="M938.5 131.5 L942 128 L945.5 131.5 Z" fill="#9aa0aa"/>
<path d="M938.5 307 L942 310.5 L945.5 307 Z" fill="#9aa0aa"/>
<path d="M939.5 146 h6 M939.5 149 h6 M939.5 152 h6" stroke="#707888" stroke-width="1"/>
<path d="M210.5 322 L207 325.5 L210.5 329 Z" fill="#9aa0aa"/>
<path d="M925 322 L928.5 325.5 L925 329 Z" fill="#9aa0aa"/>
<path d="M354 322 v7 M357 322 v7 M360 322 v7" stroke="#5a6272" stroke-width="1.2"/>
<!-- grid2 scrollbar -->
<path d="M246 585.5 L242.5 589 L246 592.5 Z" fill="#9aa0aa"/>
<path d="M907.5 585.5 L911 589 L907.5 592.5 Z" fill="#9aa0aa"/>
<path d="M411.5 585.5 v7 M414.5 585.5 v7 M417.5 585.5 v7" stroke="#5a6272" stroke-width="1.2"/>
<!-- splitter grips -->
<g fill="#7a8498">
<rect x="570" y="335" width="1.5" height="1.5"/><rect x="573.5" y="335" width="1.5" height="1.5"/><rect x="577" y="335" width="1.5" height="1.5"/><rect x="580.5" y="335" width="1.5" height="1.5"/>
<rect x="569" y="604" width="1.5" height="1.5"/><rect x="572.5" y="604" width="1.5" height="1.5"/><rect x="576" y="604" width="1.5" height="1.5"/><rect x="579.5" y="604" width="1.5" height="1.5"/>
<rect x="195" y="333" width="1.5" height="1.5"/><rect x="195" y="336.5" width="1.5" height="1.5"/><rect x="195" y="340" width="1.5" height="1.5"/><rect x="195" y="343.5" width="1.5" height="1.5"/>
</g>
<!-- bottom tab icons -->
<rect x="259" y="346" width="16" height="16" fill="#c6c8cc"/>
<g transform="rotate(-35 267 354)">
<rect x="261" y="348.5" width="12" height="11" rx="1" fill="#d01a1a" stroke="#8a0c0c" stroke-width="0.7"/>
<rect x="261.5" y="358.5" width="11.5" height="2" fill="#fff" stroke="#b0b0b0" stroke-width="0.4"/>
<circle cx="267" cy="353.5" r="2.8" fill="none" stroke="#fff" stroke-width="1.2"/>
</g>
<rect x="279.5" y="373.5" width="11.5" height="12" fill="#f2f5fb" stroke="#5a70a8" stroke-width="1"/>
<path d="M282 375.5 V383.5 H287" fill="none" stroke="#5a70a8" stroke-width="0.9"/>
<g transform="translate(289.5 383.5)"><circle r="3.3" fill="#8a96b0" stroke="#5a6888" stroke-width="0.6"/><path d="M0 -4.3 V4.3 M-4.3 0 H4.3 M-3 -3 L3 3 M3 -3 L-3 3" stroke="#7a86a0" stroke-width="1.4"/><circle r="1.2" fill="#f0f2f6"/></g>
<rect x="480.3" y="346.5" width="11.5" height="14" fill="#fbfcfe" stroke="#5a74b8" stroke-width="1"/>
<path d="M480.5 351.5 L484 351.5 L486 349.5 L488 351.5 L491.5 351.5 M480.5 354.5 L484 354.5 L486 352.5 L488 354.5 L491.5 354.5" fill="none" stroke="#c02020" stroke-width="1"/>
<rect x="638.3" y="347.5" width="11" height="10" fill="#fbfcfe" stroke="#7a94d0" stroke-width="1"/>
<path d="M642 350 h4 v2 h-1 v2.5 h2 v1.2 h-6 v-1.2 h2 v-2.5 h-1 z" fill="#5a6a8a"/>
<path d="M643 359.5 L651.5 351" stroke="#d08a20" stroke-width="3"/>
<path d="M643.6 358.8 L651 351.5" stroke="#ffe090" stroke-width="0.8"/>
<path d="M847 348.5 V357 Q847 360 849.2 360 Q851.4 360 851.4 357 V350 Q851.4 348 849.8 348 Q848.4 348 848.4 350 V356" fill="none" stroke="#a8acb4" stroke-width="1.5"/>
<path d="M536.5 376 h5 l1 1.5 h5 v9 h-11 z" fill="url(#folderG2)" stroke="#c07820" stroke-width="0.8"/>
<rect x="540" y="373" width="9" height="7.5" fill="#fbfcfe" stroke="#6a78b8" stroke-width="0.8"/>
<path d="M541.5 375.5 h6 M541.5 377.5 h6" stroke="#6a78b8" stroke-width="0.8"/>
<path d="M537 386.5 L539 380.5 H552 L549.5 386.5 Z" fill="url(#folderG2)" stroke="#c07820" stroke-width="0.8"/>
<path d="M841 375.2 H831.3 L836.2 380 L831.3 384.8 H841" fill="none" stroke="#e08a20" stroke-width="2.2"/>
<path d="M841 375.2 H831.3 L836.2 380 L831.3 384.8 H841" fill="none" stroke="#ffe0a0" stroke-width="0.8"/>
<!-- grid2 left icons -->
<path d="M214.5 458 L223.5 466 M223.5 458 L214.5 466" stroke="url(#xG)" stroke-width="3.4" stroke-linecap="round"/>
<rect x="211.5" y="484.5" width="14" height="11" fill="#fff" stroke="#5a6ab0" stroke-width="1"/>
<path d="M214.5 487 v6.5 M216.2 487 v6.5 M218 487 v6.5 M219.8 487 v6.5 M221.6 487 v6.5 M223.2 487 v6.5" stroke="#111" stroke-width="0.9"/>
<rect x="212.5" y="514.5" width="10" height="10.5" fill="#e8eef8" stroke="#4a88d0" stroke-width="0.8"/>
<path d="M209.5 514 V530 M208 514 h3 M208 530 h3 M212.5 528 H222.5 M212.5 526.5 V529.5 M222.5 526.5 V529.5" stroke="#1a2a50" stroke-width="1.1"/>
<!-- right list icon -->
<g fill="none" stroke="#4a7ad0" stroke-width="0.9"><circle cx="926.5" cy="456" r="1.4"/><circle cx="926.5" cy="461" r="1.4"/><circle cx="926.5" cy="466" r="1.4"/></g>
<path d="M929.5 456 h10 M929.5 458.5 h10 M929.5 461 h10 M929.5 463.5 h10 M929.5 466 h10" stroke="#2a3450" stroke-width="1"/>
</svg>

<div class="a" style="left:436px;top:124px;width:248px;height:71px;background:rgba(0,0,0,0.18);filter:blur(1.5px)"></div>
<div class="a" style="left:433px;top:121px;width:248px;height:71px;background:#f0f0f0;border:1px solid #979797"></div>
<div class="a" style="left:435px;top:168px;width:243px;height:21px;background:linear-gradient(#a8d0f5,#8dc0ee)"></div>
<div class="t" style="left:467.00px;top:129px;font-size:12px;color:#000;transform:scaleX(0.9926);">Dokument przyjęcia</div>
<div class="t" style="left:467.00px;top:151px;font-size:12px;color:#000;transform:scaleX(0.9822);">Dodaj do istniejącego przyjęcia</div>
<div class="t" style="left:467.00px;top:173px;font-size:12px;color:#000;transform:scaleX(0.9625);">Faktura wewnętrzna</div>
<svg width="960" height="657" style="left:0;top:0">
<rect x="431" y="165.5" width="252" height="25" rx="5" fill="none" stroke="#ee0a10" stroke-width="2.2"/>
<rect x="203" y="201.6" width="336" height="20.4" rx="4" fill="none" stroke="#ee0a10" stroke-width="2.2"/>
<rect x="16.5" y="190.5" width="126.5" height="29" rx="5" fill="none" stroke="#ee0a10" stroke-width="2.2"/>
<rect x="431" y="82" width="41" height="38" rx="4" fill="none" stroke="#ee0a10" stroke-width="2.2"/>
<line x1="437" y1="141" x2="449.5" y2="166" stroke="#ee0a10" stroke-width="2.6"/>
<polygon points="454.5,176 442.4,165.8 453.6,160.2" fill="#ee0a10"/>
<g fill="rgba(214,0,6,0.82)" stroke="#f20a10" stroke-width="2">
<circle cx="150.5" cy="204.8" r="14"/>
<circle cx="197.4" cy="208.7" r="13.8"/>
<circle cx="431.6" cy="127.5" r="13.9"/>
</g>
</svg>
<svg width="960" height="657" style="left:0;top:0"><path d="M151.2 199 V210.2 M147.9 201.8 L151.2 199.2" stroke="#fff" stroke-width="1.7" fill="none"/></svg>
<div class="t" style="left:194.00px;top:202px;font-size:14px;color:#fff;transform:scaleX(0.9491);">2</div>
<div class="t" style="left:427.90px;top:121px;font-size:14px;color:#fff;transform:scaleX(0.9491);">3</div>
</body></html>
